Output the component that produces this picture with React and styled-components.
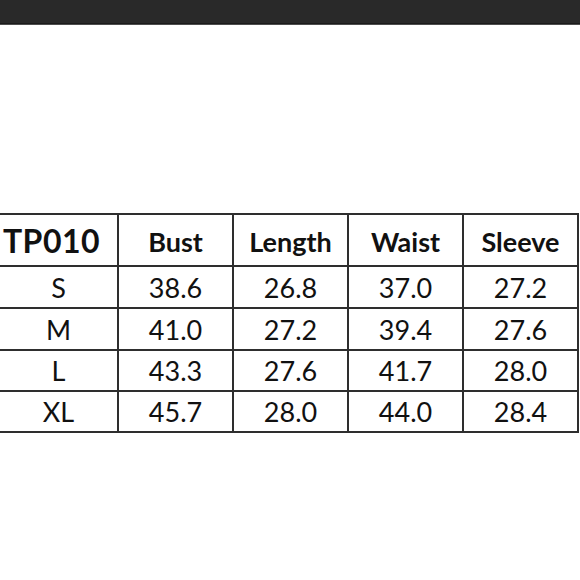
import React from "react";
import styled, { createGlobalStyle } from "styled-components";

const Global = createGlobalStyle`
  html, body { margin: 0; padding: 0; background: #fff; }
  body { font-family: Lato, "Open Sans", sans-serif; color: #111; }
`;

const Page = styled.div`
  width: 580px;
  height: 580px;
  overflow: hidden;
  display: flex;
  flex-direction: column;
`;

const TopBar = styled.div`
  height: 23px;
  background: #292929;
  border-bottom: 1px solid #1b1b1b;
  box-shadow: 0 1px 0 #4d4d4d;
`;

const Body = styled.div`
  padding-top: 189px;
`;

const Grid = styled.div`
  display: grid;
  grid-template-columns: 119px 115px 115px 115px 115px;
  grid-template-rows: 52px 42px 42px 41px 41px;
  border-top: 2px solid #2e2e2e;
  width: 579px;
`;

const Cell = styled.div`
  display: flex;
  align-items: center;
  justify-content: center;
  border-right: 2px solid #2e2e2e;
  border-bottom: 2px solid #2e2e2e;
  font-size: ${(p) => (p.$big ? "32px" : "27px")};
  font-weight: ${(p) => (p.$head || p.$big ? 700 : 400)};
  letter-spacing: ${(p) => (p.$big ? "0.5px" : "0")};
  padding-top: ${(p) => (p.$head ? "2px" : "0")};
  padding-right: ${(p) => (p.$big ? "14px" : "0")};
`;

const header = ["Bust", "Length", "Waist", "Sleeve"];
const rows = [
  ["S", "38.6", "26.8", "37.0", "27.2"],
  ["M", "41.0", "27.2", "39.4", "27.6"],
  ["L", "43.3", "27.6", "41.7", "28.0"],
  ["XL", "45.7", "28.0", "44.0", "28.4"],
];

export default function App() {
  return (
    <Page>
      <Global />
      <TopBar />
      <Body>
        <Grid>
          <Cell $big>TP010</Cell>
          {header.map((h) => (
            <Cell key={h} $head>
              {h}
            </Cell>
          ))}
          {rows.map((r) =>
            r.map((v, i) => <Cell key={r[0] + i}>{v}</Cell>)
          )}
        </Grid>
      </Body>
    </Page>
  );
}
